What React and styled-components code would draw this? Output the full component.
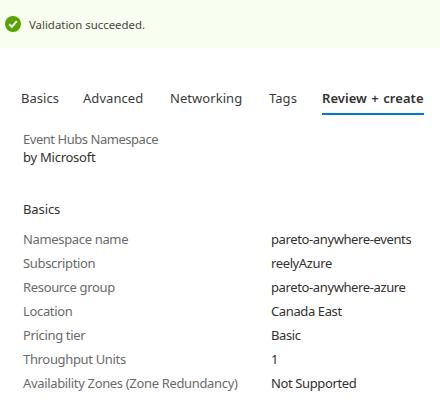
import React from "react";
import styled, { createGlobalStyle } from "styled-components";

const GlobalStyle = createGlobalStyle`
  * { box-sizing: border-box; }
  body { margin: 0; background: #fff; font-family: "Noto Sans", "Open Sans", sans-serif; color: #323130; }
`;

const Page = styled.main`
  width: 440px;
  height: 400px;
  overflow: hidden;
  background: #fff;
`;

const Banner = styled.div`
  display: flex;
  align-items: center;
  gap: 8px;
  height: 49px;
  padding: 0 5px;
  background: #f8fff0;
  font-size: 11.4px;
  color: #44443f;
`;

const BannerIcon = styled.svg`
  flex: none;
  margin-top: -1px;
`;

const Tabs = styled.nav`
  display: grid;
  grid-template-columns: 62px 87px 99px 53px 102px;
  padding: 33px 0 0 21px;
`;

const Tab = styled.button`
  border: 0;
  padding: 0;
  height: 33px;
  background: none;
  font: inherit;
  text-align: left;
  white-space: nowrap;
  color: ${(p) => (p.$active ? "#323130" : "#3b3a39")};
  font-size: 13px;
  line-height: 32px;
  letter-spacing: 0.05px;
  word-spacing: 1px;
  font-weight: ${(p) => (p.$active ? 600 : 400)};
  border-bottom: 2px solid ${(p) => (p.$active ? "#0078d4" : "transparent")};
`;

const Product = styled.section`
  padding: 15px 0 0 23px;
  font-size: 13px;
  line-height: 18px;
  letter-spacing: -0.46px;
`;

const Muted = styled.div`
  color: #6a6a6a;
`;

const Publisher = styled.div`
  letter-spacing: -0.25px;
`;

const Heading = styled.h2`
  margin: 31px 0 0 23px;
  font-size: 13px;
  font-weight: 400;
  line-height: 24px;
  letter-spacing: -0.1px;
`;

const Details = styled.dl`
  display: grid;
  grid-template-columns: 248px 1fr;
  grid-auto-rows: 24px;
  margin: 6px 0 0 23px;
  font-size: 13px;
  line-height: 24px;
`;

const Term = styled.dt`
  color: #6a6a6a;
  letter-spacing: -0.34px;
  white-space: nowrap;
`;

const Value = styled.dd`
  margin: 0;
  letter-spacing: -0.38px;
  white-space: nowrap;
`;

const tabs = ["Basics", "Advanced", "Networking", "Tags", "Review + create"];

const details = [
  ["Namespace name", "pareto-anywhere-events"],
  ["Subscription", "reelyAzure"],
  ["Resource group", "pareto-anywhere-azure"],
  ["Location", "Canada East"],
  ["Pricing tier", "Basic"],
  ["Throughput Units", "1"],
  ["Availability Zones (Zone Redundancy)", "Not Supported"],
];

export default function App() {
  return (
    <Page>
      <GlobalStyle />
      <Banner>
        <BannerIcon width="16" height="16" viewBox="0 0 16 16">
          <circle cx="8" cy="8" r="8" fill="#57a300" />
          <path d="M4.2 8.2 6.9 10.8 11.8 5.1" fill="none" stroke="#fff" strokeWidth="2" />
        </BannerIcon>
        <span>Validation succeeded.</span>
      </Banner>
      <Tabs>
        {tabs.map((t) => (
          <Tab key={t} $active={t === "Review + create"}>{t}</Tab>
        ))}
      </Tabs>
      <Product>
        <Muted>Event Hubs Namespace</Muted>
        <Publisher>by Microsoft</Publisher>
      </Product>
      <Heading>Basics</Heading>
      <Details>
        {details.map(([k, v]) => (
          <React.Fragment key={k}>
            <Term>{k}</Term>
            <Value>{v}</Value>
          </React.Fragment>
        ))}
      </Details>
    </Page>
  );
}
